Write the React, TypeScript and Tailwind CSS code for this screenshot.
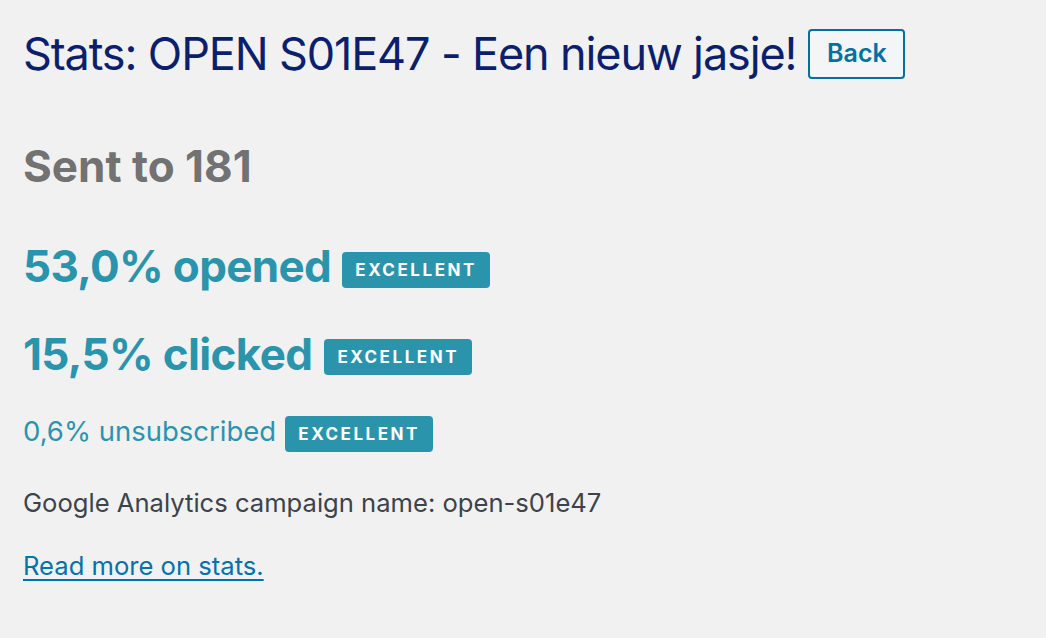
export default function App() {
  return (
    <div className="min-h-[638px] w-full bg-[#f1f1f1] px-[23px] pt-[24px] font-['Inter',sans-serif]">
      <div className="flex items-center gap-[12px]">
        <h1 className="text-[45px] leading-[60px] font-normal tracking-[-0.025em] text-[#0b1f6c]">Stats: OPEN S01E47 - Een nieuw jasje!</h1>
        <a className="flex h-[50px] w-[97px] items-center justify-center rounded-[4px] border-2 border-[#0071a1] bg-[#f3f5f6] text-[25px] font-semibold text-[#0071a1]">Back</a>
      </div>
      <h2 className="mt-[57px] text-[44px] leading-[50px] font-bold text-[#727272]">Sent to 181</h2>
      <div className="mt-[50px] flex items-start gap-[11px]">
        <span className="text-[44px] leading-[50px] font-bold tracking-[-0.015em] text-[#2b94ad]">53,0% opened</span>
        <Badge className="mt-[11px]" />
      </div>
      <div className="mt-[38px] flex items-start gap-[12px]">
        <span className="text-[44px] leading-[50px] font-bold tracking-[-0.015em] text-[#2b94ad]">15,5% clicked</span>
        <Badge className="mt-[10px]" />
      </div>
      <div className="mt-[34px] flex items-start gap-[9px]">
        <span className="text-[27.5px] leading-[36px] text-[#2b94ad]">0,6% unsubscribed</span>
        <Badge className="mt-[3px]" />
      </div>
      <p className="mt-[34px] text-[25.6px] leading-[34px] text-[#3c434a]">Google Analytics campaign name: open-s01e47</p>
      <p className="mt-[29px] text-[25.6px] leading-[34px]">
        <a className="text-[#0073aa] underline decoration-2 underline-offset-[4px]">Read more on stats.</a>
      </p>
    </div>
  );
}

function Badge({ className = "" }: { className?: string }) {
  return (
    <span className={`flex h-[36px] w-[148px] items-center justify-center rounded-[4px] bg-[#2b94ad] pt-[2px] text-[17px] font-bold tracking-[0.15em] text-white ${className}`}>
      EXCELLENT
    </span>
  );
}
